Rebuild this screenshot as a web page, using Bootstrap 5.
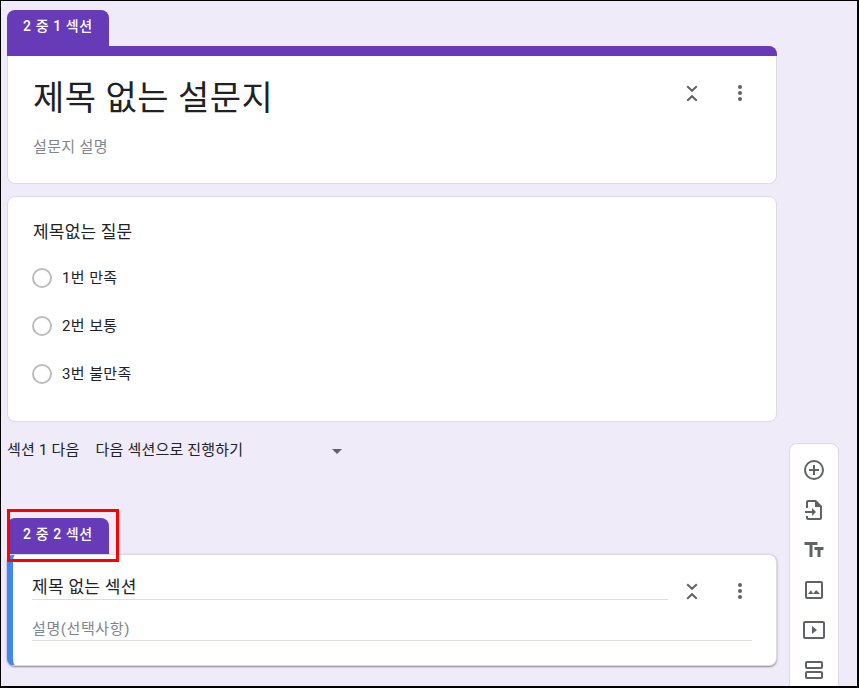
<!DOCTYPE html>
<html lang="ko">
<head>
<meta charset="utf-8">
<title>설문지</title>
<link href="https://cdn.jsdelivr.net/npm/bootstrap@5.3.0/dist/css/bootstrap.min.css" rel="stylesheet">
<style>
html,body{margin:0;height:688px;overflow:hidden;background:#f0ebf8}
body{font-family:Roboto,"Noto Sans CJK KR",sans-serif;color:#202124}
.frame{width:859px;height:688px;border:solid #000;border-width:1px 2px 2px 1px;background:#f0ebf8;overflow:hidden;gap:12px;padding:9px 0 0 6px}
.main-col{width:770px;flex:none}
.tab{width:102px;height:36px;background:#673ab7;color:#fff;border-radius:8px 8px 0 0;font-size:14px;font-weight:500;letter-spacing:.6px;padding-left:16px;line-height:33px;white-space:nowrap}
.sheet{background:#fff;border:1px solid #dadce0;border-radius:8px;width:770px}
.sheet-title{height:138px;border:0;border-top:10px solid #673ab7;border-top-left-radius:0;box-shadow:inset 1px 0 #dadce0,inset -1px 0 #dadce0,inset 0 -1px #dadce0;padding:0 25px 0 26px}
.title-text{font-size:34px;line-height:44px;margin-top:20px;letter-spacing:.5px}
.desc{font-size:15px;letter-spacing:.35px;color:#80868b;line-height:20px;margin-top:17px}
.sheet-q{height:226px;margin-top:12px;padding:25px 24px 0 25px}
.q-title{font-size:17px;letter-spacing:.2px;line-height:20px;margin-bottom:12px}
.opt{height:48px;gap:10px;font-size:15px;letter-spacing:.4px;margin-left:-1px}
.circle{width:20px;height:20px;border:2px solid #bdbdbd;border-radius:50%;flex:none}
.next-row{height:96px;font-size:15px;padding-top:18px;line-height:20px;letter-spacing:.2px}
.next-sel{margin-left:16px;width:247px}
.caret{width:0;height:0;border:5px solid transparent;border-top-color:#5f6368;border-bottom:0;margin-top:2px}
.tab-wrap{width:112px;height:53px;padding-top:9px;margin-bottom:-8px;margin-top:-9px}
.mark-box{inset:0;border:3px solid #f00;z-index:2;pointer-events:none}
.sheet-s{height:112px;box-shadow:0 1px 2px rgba(60,64,67,.6);padding:0 24px 0 19px;overflow:hidden;border-left:6px solid #4285f4;border-color:#dadce0 #dadce0 #dadce0 #4285f4}
.s-head{height:45px}
.s-name{flex:1;height:45px;font-size:17px;letter-spacing:.3px;line-height:20px;padding-top:22px;border-bottom:1px solid #dadce0;white-space:nowrap}
.s-desc{height:41px;border-bottom:1px solid #dadce0;font-size:15px;letter-spacing:.6px;color:#80868b;padding-top:19px;line-height:20px}
.acts{gap:24px;padding-left:12px;flex:none}
.acts-top{margin-top:25px}
.acts-sec{padding-top:24px}
.acts svg{display:block;flex:none}
.tools{width:50px;height:260px;margin-top:433px;background:#fff;border:1px solid #dadce0;border-radius:8px;padding-top:14px;flex:none}
.tools svg{display:block;margin:0 auto}
.tools div{height:40px}
</style>
</head>
<body>
<div class="frame d-flex">
  <div class="main-col">
    <div class="tab">2 중 1 섹션</div>
    <div class="sheet sheet-title d-flex justify-content-between">
      <div>
        <div class="title-text">제목 없는 설문지</div>
        <div class="desc">설문지 설명</div>
      </div>
      <div class="acts acts-top d-flex align-items-start">
        <svg width="24" height="24" viewBox="0 0 24 24" fill="none" stroke="#5f6368" stroke-width="2"><path d="M7.2 5.2l4.8 4.6 4.8-4.6M7.2 19.8l4.8-4.6 4.8 4.6"/></svg>
        <svg width="24" height="24" viewBox="0 0 24 24" fill="#5f6368"><circle cx="12" cy="6" r="2"/><circle cx="12" cy="12" r="2"/><circle cx="12" cy="18" r="2"/></svg>
      </div>
    </div>
    <div class="sheet sheet-q">
      <div class="q-title">제목없는 질문</div>
      <div class="opt d-flex align-items-center"><span class="circle"></span><span>1번 만족</span></div>
      <div class="opt d-flex align-items-center"><span class="circle"></span><span>2번 보통</span></div>
      <div class="opt d-flex align-items-center"><span class="circle"></span><span>3번 불만족</span></div>
    </div>
    <div class="next-row d-flex align-items-start">
      <span>섹션 1 다음</span>
      <span class="next-sel d-flex align-items-center justify-content-between"><span>다음 섹션으로 진행하기</span><span class="caret"></span></span>
    </div>
    <div class="tab-wrap position-relative">
      <div class="tab">2 중 2 섹션</div>
      <div class="mark-box position-absolute"></div>
    </div>
    <div class="sheet sheet-s">
      <div class="s-head d-flex">
        <div class="s-name">제목 없는 섹션</div>
        <div class="acts acts-sec d-flex">
          <svg width="24" height="24" viewBox="0 0 24 24" fill="none" stroke="#5f6368" stroke-width="2"><path d="M7.2 5.2l4.8 4.6 4.8-4.6M7.2 19.8l4.8-4.6 4.8 4.6"/></svg>
          <svg width="24" height="24" viewBox="0 0 24 24" fill="#5f6368"><circle cx="12" cy="6" r="2"/><circle cx="12" cy="12" r="2"/><circle cx="12" cy="18" r="2"/></svg>
        </div>
      </div>
      <div class="s-desc">설명(선택사항)</div>
    </div>
  </div>
  <div class="tools">
    <div><svg width="24" height="24" viewBox="0 0 24 24" fill="#5f6368"><path d="M13 7h-2v4H7v2h4v4h2v-4h4v-2h-4zM12 2a10 10 0 1 0 0 20 10 10 0 0 0 0-20zm0 18a8 8 0 1 1 0-16 8 8 0 0 1 0 16z"/></svg></div>
    <div><svg width="24" height="24" viewBox="0 0 24 24" fill="#5f6368"><path d="M14 2H6a2 2 0 0 0-2 2v6h2V4h7v5h5v11H6v-2H4v2a2 2 0 0 0 2 2h12a2 2 0 0 0 2-2V8zM10 13H3v2h7v3l4-4-4-4z"/></svg></div>
    <div><svg width="24" height="24" viewBox="0 0 24 24" fill="#5f6368"><path d="M2.5 4v3h5v12h3V7h5V4zM21.5 9h-9v3h3v7h3v-7h3z"/></svg></div>
    <div><svg width="24" height="24" viewBox="0 0 24 24" fill="#5f6368"><path d="M19 5v14H5V5zm0-2H5a2 2 0 0 0-2 2v14a2 2 0 0 0 2 2h14a2 2 0 0 0 2-2V5a2 2 0 0 0-2-2zm-4.9 8.9-3 3.9L9 12.3 6 16h12z"/></svg></div>
    <div><svg width="24" height="24" viewBox="0 0 24 24" fill="#5f6368"><path d="M10 8v8l5-4zm11-5H3a2 2 0 0 0-2 2v14a2 2 0 0 0 2 2h18a2 2 0 0 0 2-2V5a2 2 0 0 0-2-2zm0 16H3V5h18z"/></svg></div>
    <div><svg width="24" height="24" viewBox="0 0 24 24" fill="#5f6368"><path d="M19 13H5a2 2 0 0 0-2 2v4a2 2 0 0 0 2 2h14a2 2 0 0 0 2-2v-4a2 2 0 0 0-2-2zm0 6H5v-4h14zM19 3H5a2 2 0 0 0-2 2v4a2 2 0 0 0 2 2h14a2 2 0 0 0 2-2V5a2 2 0 0 0-2-2zm0 6H5V5h14z"/></svg></div>
  </div>
</div>
<script src="https://cdn.jsdelivr.net/npm/bootstrap@5.3.0/dist/js/bootstrap.bundle.min.js"></script>
</body>
</html>
